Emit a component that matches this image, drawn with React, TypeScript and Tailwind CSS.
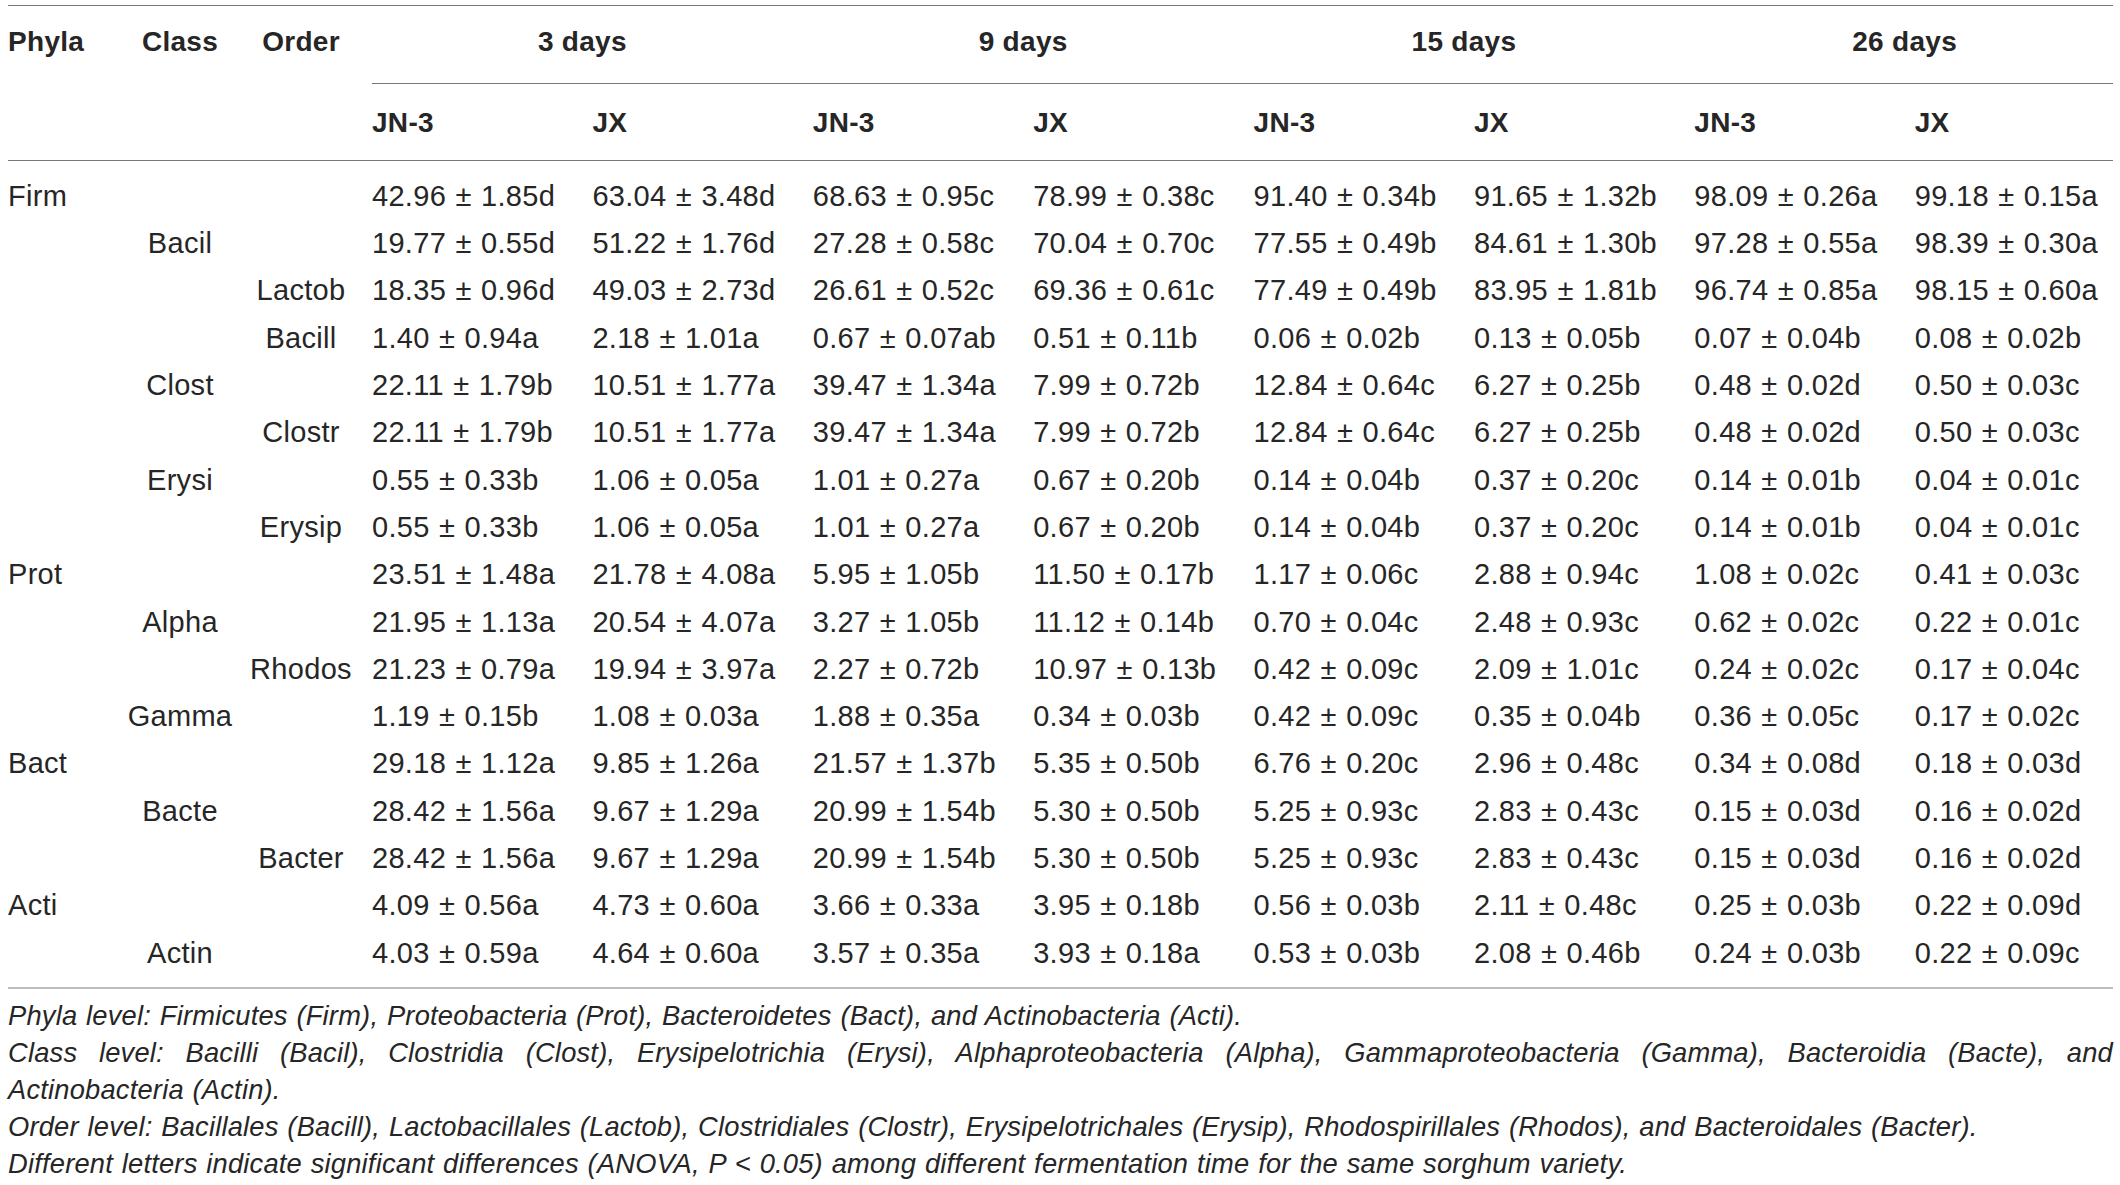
const rows: [string, string, string, string[]][] = [
  ["Firm", "", "", ["42.96 ± 1.85d", "63.04 ± 3.48d", "68.63 ± 0.95c", "78.99 ± 0.38c", "91.40 ± 0.34b", "91.65 ± 1.32b", "98.09 ± 0.26a", "99.18 ± 0.15a"]],
  ["", "Bacil", "", ["19.77 ± 0.55d", "51.22 ± 1.76d", "27.28 ± 0.58c", "70.04 ± 0.70c", "77.55 ± 0.49b", "84.61 ± 1.30b", "97.28 ± 0.55a", "98.39 ± 0.30a"]],
  ["", "", "Lactob", ["18.35 ± 0.96d", "49.03 ± 2.73d", "26.61 ± 0.52c", "69.36 ± 0.61c", "77.49 ± 0.49b", "83.95 ± 1.81b", "96.74 ± 0.85a", "98.15 ± 0.60a"]],
  ["", "", "Bacill", ["1.40 ± 0.94a", "2.18 ± 1.01a", "0.67 ± 0.07ab", "0.51 ± 0.11b", "0.06 ± 0.02b", "0.13 ± 0.05b", "0.07 ± 0.04b", "0.08 ± 0.02b"]],
  ["", "Clost", "", ["22.11 ± 1.79b", "10.51 ± 1.77a", "39.47 ± 1.34a", "7.99 ± 0.72b", "12.84 ± 0.64c", "6.27 ± 0.25b", "0.48 ± 0.02d", "0.50 ± 0.03c"]],
  ["", "", "Clostr", ["22.11 ± 1.79b", "10.51 ± 1.77a", "39.47 ± 1.34a", "7.99 ± 0.72b", "12.84 ± 0.64c", "6.27 ± 0.25b", "0.48 ± 0.02d", "0.50 ± 0.03c"]],
  ["", "Erysi", "", ["0.55 ± 0.33b", "1.06 ± 0.05a", "1.01 ± 0.27a", "0.67 ± 0.20b", "0.14 ± 0.04b", "0.37 ± 0.20c", "0.14 ± 0.01b", "0.04 ± 0.01c"]],
  ["", "", "Erysip", ["0.55 ± 0.33b", "1.06 ± 0.05a", "1.01 ± 0.27a", "0.67 ± 0.20b", "0.14 ± 0.04b", "0.37 ± 0.20c", "0.14 ± 0.01b", "0.04 ± 0.01c"]],
  ["Prot", "", "", ["23.51 ± 1.48a", "21.78 ± 4.08a", "5.95 ± 1.05b", "11.50 ± 0.17b", "1.17 ± 0.06c", "2.88 ± 0.94c", "1.08 ± 0.02c", "0.41 ± 0.03c"]],
  ["", "Alpha", "", ["21.95 ± 1.13a", "20.54 ± 4.07a", "3.27 ± 1.05b", "11.12 ± 0.14b", "0.70 ± 0.04c", "2.48 ± 0.93c", "0.62 ± 0.02c", "0.22 ± 0.01c"]],
  ["", "", "Rhodos", ["21.23 ± 0.79a", "19.94 ± 3.97a", "2.27 ± 0.72b", "10.97 ± 0.13b", "0.42 ± 0.09c", "2.09 ± 1.01c", "0.24 ± 0.02c", "0.17 ± 0.04c"]],
  ["", "Gamma", "", ["1.19 ± 0.15b", "1.08 ± 0.03a", "1.88 ± 0.35a", "0.34 ± 0.03b", "0.42 ± 0.09c", "0.35 ± 0.04b", "0.36 ± 0.05c", "0.17 ± 0.02c"]],
  ["Bact", "", "", ["29.18 ± 1.12a", "9.85 ± 1.26a", "21.57 ± 1.37b", "5.35 ± 0.50b", "6.76 ± 0.20c", "2.96 ± 0.48c", "0.34 ± 0.08d", "0.18 ± 0.03d"]],
  ["", "Bacte", "", ["28.42 ± 1.56a", "9.67 ± 1.29a", "20.99 ± 1.54b", "5.30 ± 0.50b", "5.25 ± 0.93c", "2.83 ± 0.43c", "0.15 ± 0.03d", "0.16 ± 0.02d"]],
  ["", "", "Bacter", ["28.42 ± 1.56a", "9.67 ± 1.29a", "20.99 ± 1.54b", "5.30 ± 0.50b", "5.25 ± 0.93c", "2.83 ± 0.43c", "0.15 ± 0.03d", "0.16 ± 0.02d"]],
  ["Acti", "", "", ["4.09 ± 0.56a", "4.73 ± 0.60a", "3.66 ± 0.33a", "3.95 ± 0.18b", "0.56 ± 0.03b", "2.11 ± 0.48c", "0.25 ± 0.03b", "0.22 ± 0.09d"]],
  ["", "Actin", "", ["4.03 ± 0.59a", "4.64 ± 0.60a", "3.57 ± 0.35a", "3.93 ± 0.18a", "0.53 ± 0.03b", "2.08 ± 0.46b", "0.24 ± 0.03b", "0.22 ± 0.09c"]],
]

const cols = "grid grid-cols-[112px_120px_122px_repeat(7,220.4px)_1fr]"

const App = () => {
  return (
    <div className="w-[2120px] h-[1185px] bg-white text-[#262626] font-['Liberation_Sans',Arial,sans-serif] overflow-hidden">
      <div className="ml-[8px] w-[2105px] pt-[5px]">
        <div className="h-px bg-[#777]" />

        {/* header row 1 */}
        <div className={`${cols} h-[77px] items-center pb-[6px] font-bold text-[28px] tracking-[0.3px]`}>
          <div>Phyla</div>
          <div className="text-center">Class</div>
          <div className="text-center">Order</div>
          <div className="col-span-2 text-center">3 days</div>
          <div className="col-span-2 text-center">9 days</div>
          <div className="col-span-2 text-center">15 days</div>
          <div className="col-span-2 text-center pl-[12px]">26 days</div>
        </div>
        <div className="ml-[364px] h-px bg-[#777]" />

        {/* header row 2 */}
        <div className={`${cols} h-[76px] items-center pt-[2px] font-bold text-[28px] tracking-[0.3px]`}>
          <div />
          <div />
          <div />
          {["JN-3", "JX", "JN-3", "JX", "JN-3", "JX", "JN-3", "JX"].map((h, i) => (
            <div key={i} className="pl-[10px]">{h}</div>
          ))}
        </div>
        <div className="h-px bg-[#777]" />

        {/* body */}
        <div className="pt-[12px] pb-[10px] text-[29px] tracking-[0.3px] [word-spacing:1px]">
          {rows.map(([p, c, o, vals], i) => (
            <div key={i} className={`${cols} h-[47.3px] items-center whitespace-nowrap`}>
              <div>{p}</div>
              <div className="text-center">{c}</div>
              <div className="text-center">{o}</div>
              {vals.map((v, j) => (
                <div key={j} className="pl-[10px]">{v}</div>
              ))}
            </div>
          ))}
        </div>
        <div className="h-[2px] bg-[#bdbdbd]" />

        {/* footnotes */}
        <div className="pt-[8px] italic text-[27.3px] leading-[37px] text-justify tracking-[0.2px] [word-spacing:1px]">
          <p>Phyla level: Firmicutes (Firm), Proteobacteria (Prot), Bacteroidetes (Bact), and Actinobacteria (Acti).</p>
          <p>Class level: Bacilli (Bacil), Clostridia (Clost), Erysipelotrichia (Erysi), Alphaproteobacteria (Alpha), Gammaproteobacteria (Gamma), Bacteroidia (Bacte), and Actinobacteria (Actin).</p>
          <p>Order level: Bacillales (Bacill), Lactobacillales (Lactob), Clostridiales (Clostr), Erysipelotrichales (Erysip), Rhodospirillales (Rhodos), and Bacteroidales (Bacter).</p>
          <p>Different letters indicate significant differences (ANOVA, P &lt; 0.05) among different fermentation time for the same sorghum variety.</p>
        </div>
      </div>
    </div>
  )
}

export default App
